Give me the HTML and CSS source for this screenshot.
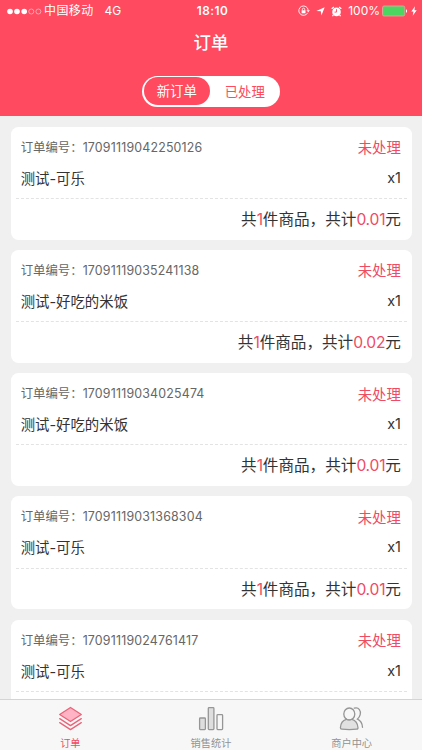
FILE: index.html
```html
<!DOCTYPE html>
<html lang="zh-CN">
<head>
<meta charset="utf-8">
<meta name="viewport" content="width=device-width, initial-scale=1">
<title>订单</title>
<link rel="stylesheet" href="styles.css">
</head>
<body>
<div class="app">
  <header class="header">
    <div class="status">
      <div class="status-left">
        <svg class="signal" width="35" height="7" viewBox="0 0 35 7" fill="#fff"><circle cx="3" cy="3.5" r="2.8"/><circle cx="10" cy="3.5" r="2.8"/><circle cx="17.2" cy="3.5" r="2.8"/><g fill="none" stroke="#fff" stroke-width=".6" opacity=".8"><circle cx="24.3" cy="3.5" r="2.5"/><circle cx="31.4" cy="3.5" r="2.5"/></g></svg>
        <span class="carrier">中国移动</span><span class="network">4G</span>
      </div>
      <span class="clock">18:10</span>
      <div class="status-right">
        <svg width="12" height="12" viewBox="0 0 12 12" fill="none" stroke="#fff"><path d="M9.7 7.8A4.7 4.7 0 1 1 10.2 5.3" stroke-width=".9"/><path d="M8.5 5.3h3.4L10.2 7.3z" fill="#fff" stroke="none"/><rect x="3.6" y="5.3" width="3.9" height="3" fill="#fff" stroke="none"/><path d="M4.4 5.5V4.3a1.15 1.15 0 0 1 2.3 0v1.2" stroke-width=".8"/></svg>
        <svg class="arrow" width="9" height="9" viewBox="0 0 9 9"><path d="M8.7.3 5.4 8.6 4.8 4.3.3 4z" fill="#fff"/></svg>
        <svg class="alarm" width="11" height="11" viewBox="0 0 11 11"><circle cx="5.5" cy="5.9" r="4.3" fill="#fff"/><path d="M.7 2.8 2.9 1M10.3 2.8 8.1 1M2.4 9l-1 1.2M8.6 9l1 1.2" stroke="#fff" stroke-width="1.3"/><path d="M5.5 3.2v2.9H3.5" fill="none" stroke="#ff4a60" stroke-width=".9"/></svg>
        <span class="percent">100%</span>
        <svg class="battery" width="26" height="12" viewBox="0 0 26 12"><rect x=".5" y="1" width="22.3" height="10" rx="1.6" fill="#4cd661" stroke="#e4a19c" stroke-width=".9"/><path d="M24 4.2c1.5.4 1.5 3.2 0 3.6z" fill="#fff"/></svg>
        <svg class="bolt" width="6" height="10" viewBox="0 0 6 10"><path d="M4 .3.3 5.4h2.2L1.7 9.7 5.7 4.3H3.4z" fill="#fff"/></svg>
      </div>
    </div>
    <h1 class="title">订单</h1>
    <div class="switch"><span class="tab tab-on">新订单</span><span class="tab">已处理</span></div>
  </header>
  <main class="orders">
    <section class="card">
      <div class="row meta"><span class="label">订单编号：<span class="number">17091119042250126</span></span><span class="state">未处理</span></div>
      <div class="row item"><span>测试-可乐</span><span>x1</span></div>
      <div class="total">共<b>1</b>件商品，共计<b>0.01</b>元</div>
    </section>
    <section class="card">
      <div class="row meta"><span class="label">订单编号：<span class="number">17091119035241138</span></span><span class="state">未处理</span></div>
      <div class="row item"><span>测试-好吃的米饭</span><span>x1</span></div>
      <div class="total">共<b>1</b>件商品，共计<b>0.02</b>元</div>
    </section>
    <section class="card">
      <div class="row meta"><span class="label">订单编号：<span class="number">17091119034025474</span></span><span class="state">未处理</span></div>
      <div class="row item"><span>测试-好吃的米饭</span><span>x1</span></div>
      <div class="total">共<b>1</b>件商品，共计<b>0.01</b>元</div>
    </section>
    <section class="card">
      <div class="row meta"><span class="label">订单编号：<span class="number">17091119031368304</span></span><span class="state">未处理</span></div>
      <div class="row item"><span>测试-可乐</span><span>x1</span></div>
      <div class="total">共<b>1</b>件商品，共计<b>0.01</b>元</div>
    </section>
    <section class="card">
      <div class="row meta"><span class="label">订单编号：<span class="number">17091119024761417</span></span><span class="state">未处理</span></div>
      <div class="row item"><span>测试-可乐</span><span>x1</span></div>
      <div class="total"></div>
    </section>
  </main>
  <nav class="nav">
    <a class="nav-item nav-on">
      <svg width="26" height="26" viewBox="0 0 26 26" fill="none" stroke="#ea6378" stroke-width="1.3" stroke-linejoin="round" stroke-linecap="round"><path d="M13.5 1.5 24.3 8.5 13.5 15.5 2.7 8.5z" fill="#ffb3c4"/><path d="M2.7 12.6 13.5 19.6l10.8-7M2.7 16.6 13.5 23.6l10.8-7"/></svg>
      <span>订单</span>
    </a>
    <a class="nav-item">
      <svg width="26" height="26" viewBox="0 0 26 26" fill="#dedede" stroke="#969696" stroke-width="1.3"><rect x="1.6" y="12" width="5.8" height="11.6" rx=".8"/><rect x="10.3" y="1.6" width="5.6" height="22" rx=".8"/><rect x="19" y="8.6" width="5.6" height="15" rx=".8" fill="#f7f7f7"/></svg>
      <span>销售统计</span>
    </a>
    <a class="nav-item">
      <svg width="26" height="26" viewBox="0 0 26 26" fill="none" stroke="#969696" stroke-width="1.3" stroke-linecap="round"><path d="M15.3 2.2C20 .8 22.2 5 21.2 8.6c-.5 2-1.5 3.4-2.7 4.5 3.1 1.4 4.8 4.4 5 8.2"/><ellipse cx="10.3" cy="8" rx="5.5" ry="6"/><path d="M7.3 13.3C3.7 14.3 1.6 18 1.4 21.7c0 1 .5 1.3 1.4 1.4 5 .6 10 .6 14.9 0 .9-.1 1.4-.5 1.3-1.4-.3-3.8-2.4-7.4-6-8.4-1.8 1-4 1-5.7 0z" fill="#e1e1e1"/></svg>
      <span>商户中心</span>
    </a>
  </nav>
</div>
</body>
</html>
```
FILE: styles.css
```css
* { box-sizing: border-box; }
body {
  margin: 0;
  font-family: Inter, "Noto Sans CJK SC", sans-serif;
  color: #333;
  background: #f0f0f0;
}
svg { display: block; flex: none; }
.app {
  width: 422px;
  height: 750px;
  display: flex;
  flex-direction: column;
  overflow: hidden;
}
.header {
  flex: none;
  height: 116px;
  background: #ff4a60;
  color: #fff;
  display: flex;
  flex-direction: column;
  align-items: center;
}
.status {
  width: 100%;
  height: 22px;
  padding: 0 5px 0 7px;
  display: grid;
  grid-template-columns: 1fr auto 1fr;
  align-items: center;
  font-size: 12px;
  line-height: 22px;
}
.status-left, .status-right { display: flex; align-items: center; }
.status-right { justify-content: flex-end; }
.carrier { margin-left: 2px; letter-spacing: .4px; }
.network { margin-left: 11px; }
.clock { font-weight: 600; font-size: 11.8px; letter-spacing: .5px; padding-left: 1px; }
.arrow { margin-left: 6px; }
.alarm { margin-left: 6px; }
.percent { margin-left: 6px; }
.battery { margin-left: 2px; }
.bolt { margin-left: 3px; }
.title {
  margin: 0;
  height: 43px;
  line-height: 42px;
  font-size: 17.4px;
  font-weight: 500;
}
.switch {
  margin-top: 10.5px;
  width: 138px;
  height: 31px;
  padding: 1.8px;
  border-radius: 16px;
  background: #fff;
  display: flex;
}
.tab {
  flex: 1;
  border-radius: 14px;
  color: #ff4a60;
  font-size: 13.4px;
  line-height: 31px;
  text-align: center;
  padding-left: 1.5px;
}
.tab-on { flex: none; width: 66px; padding: 0; background: #ff4a60; color: #fff; line-height: 28px; }
.orders {
  flex: 1;
  min-height: 0;
  overflow: hidden;
  padding: 10.5px 10.5px 0;
  display: flex;
  flex-direction: column;
  gap: 10.25px;
}
.card {
  flex: none;
  height: 113px;
  padding: 5px 5px 0;
  border-radius: 7.5px;
  background: #fff;
}
.row {
  display: flex;
  justify-content: space-between;
  align-items: center;
  padding: 0 5.6px 0 5.2px;
}
.meta { height: 30px; }
.label { font-size: 12.4px; color: #666; white-space: nowrap; }
.number { letter-spacing: .18px; }
.state { font-size: 14.4px; color: #ef4b64; }
.item { height: 36.4px; padding-bottom: 5.2px; font-size: 14.4px; }
.total {
  height: 41.6px;
  border-top: 1px dashed #e3e3e3;
  padding: 0 5.6px;
  font-size: 15.6px;
  line-height: 42px;
  text-align: right;
}
.total b { font-weight: 400; color: #ef4b64; letter-spacing: -.2px; }
.nav {
  flex: none;
  height: 51px;
  border-top: 1px solid #d4d4d4;
  background: #f7f7f7;
  display: grid;
  grid-template-columns: repeat(3, 1fr);
}
.nav-item {
  display: flex;
  flex-direction: column;
  align-items: center;
  padding-top: 6px;
  font-size: 10.2px;
  line-height: 22px;
  color: #929292;
}
.nav-on { color: #ef4b64; }
```
